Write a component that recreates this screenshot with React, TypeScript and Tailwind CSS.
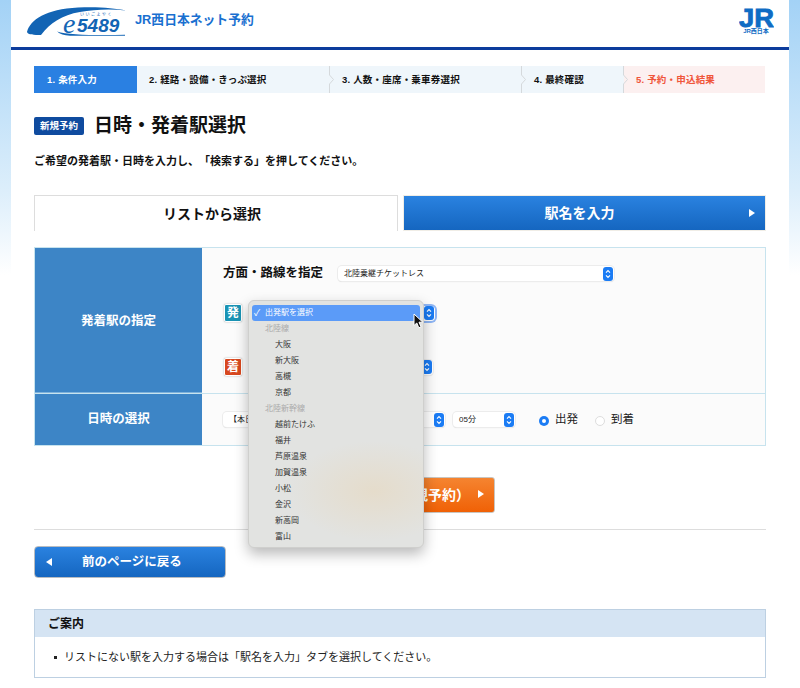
const font = '[font-family:"Liberation_Sans","Noto_Sans_CJK_JP",sans-serif]'

function Stepper() {
  return (
    <span className="flex h-[14px] w-[10px] shrink-0 flex-col items-center justify-center rounded-[3px] bg-[#1b7cf4]">
      <svg width="6" height="10" viewBox="0 0 6 10" fill="none" stroke="#fff" strokeWidth="1.1">
        <path d="M1 3.6 3 1.6 5 3.6" />
        <path d="M1 6.4 3 8.4 5 6.4" />
      </svg>
    </span>
  )
}

function Select({ width, label, focus }: { width: string; label: string; focus?: boolean }) {
  return (
    <div
      className={`flex h-[15px] items-center justify-between rounded-[4px] bg-white pl-[6px] pr-[1px] text-[8px] leading-none text-[#222] ${width} ${
        focus
          ? 'shadow-[0_0_0_2px_#8fb6f5]'
          : 'shadow-[0_0_0_1px_#ececec,0_1px_1px_rgba(0,0,0,0.15)]'
      }`}
    >
      <span className="whitespace-nowrap">{label}</span>
      <Stepper />
    </div>
  )
}

function Radio({ on, label }: { on?: boolean; label: string }) {
  return (
    <div className="flex items-center gap-[6px] text-[11.500px] leading-none text-[#222]">
      {on ? (
        <span className="mt-[3px] flex h-[10px] w-[10px] items-center justify-center rounded-full bg-[#1b7cf4]">
          <span className="h-[4px] w-[4px] rounded-full bg-white" />
        </span>
      ) : (
        <span className="mt-[3px] h-[10px] w-[10px] rounded-full border border-[#ddd] bg-white" />
      )}
      <span>{label}</span>
    </div>
  )
}

function Badge({ label, color }: { label: string; color: string }) {
  return (
    <span
      className={`ml-[1px] flex h-[18px] w-[18px] shrink-0 items-center justify-center rounded-[2px] border border-white text-[12px] font-bold leading-none text-white shadow-[0_0_2px_rgba(0,0,0,0.3)] ${color}`}
    >
      {label}
    </span>
  )
}

function Chevron({ color }: { color: string }) {
  return (
    <svg className="absolute left-[-1px] top-0" width="6" height="27" viewBox="0 0 6 27" fill="none" stroke={color} strokeWidth="1">
      <path d="M.5 0V9L4.5 13.5.5 18V27" />
    </svg>
  )
}

const steps = [
  { label: '2. 経路・設備・きっぷ選択', width: 'w-[193px]', bg: 'bg-[#eff6fb]', text: 'text-[#111]' },
  { label: '3. 人数・座席・乗車券選択', width: 'w-[192px]', bg: 'bg-[#eff6fb]', text: 'text-[#111]' },
  { label: '4. 最終確認', width: 'w-[102px]', bg: 'bg-[#eff6fb]', text: 'text-[#111]' },
  { label: '5. 予約・申込結果', width: 'w-[141px]', bg: 'bg-[#fcf0f0]', text: 'text-[#f0553a]' },
]

const menuGroups = [
  { name: '北陸線', items: ['大阪', '新大阪', '高槻', '京都'] },
  { name: '北陸新幹線', items: ['越前たけふ', '福井', '芦原温泉', '加賀温泉', '小松', '金沢', '新高岡', '富山'] },
]

function Logo() {
  return (
    <div className="relative h-[47px] w-[100px] shrink-0">
      <svg className="absolute left-0 top-0" width="100" height="47" viewBox="0 0 100 47">
        <path d="M1 32C4 20 20 9 52 7.500 72 6.500 88 8 100 10.500 84 8.800 68 9.500 54 12 36 15 24 23 15 35 8 35 2 35 1 32Z" fill="#1264b4" />
        <path d="M31 31.500C42 35 70 35.500 99 34.800V35.800H44C38 35.500 34 34 31 31.500Z" fill="#1264b4" />
      </svg>
      <span className="absolute left-[37px] top-[10px] font-['Liberation_Serif'] text-[28px] italic leading-none text-[#1264b4]">e</span>
      <span className="absolute left-[51px] top-[16px] text-[19px] font-bold italic leading-none text-[#1264b4]">5489</span>
      <span className="absolute left-[54px] top-[13px] text-[4px] leading-none tracking-[1.5px] text-[#1264b4]">いいごよやく</span>
    </div>
  )
}

function JrLogo() {
  return (
    <div className="flex w-[36px] flex-col items-center">
      <svg className="-mb-[6px]" width="35" height="33" viewBox="0 0 35 33">
        <text x="17.500" y="26.500" textAnchor="middle" fontFamily="Liberation Sans" fontWeight="700" fontSize="26" textLength="35" lengthAdjust="spacingAndGlyphs" fill="#0f6cc4" stroke="#0f6cc4" strokeWidth="0.8">JR</text>
      </svg>
      <span className="mt-[1px] text-[6px] font-bold leading-none text-[#0f6cc4]">JR西日本</span>
    </div>
  )
}

function Triangle({ left }: { left?: boolean }) {
  return (
    <svg width="6" height="8" viewBox="0 0 6 8" fill="#fff" className="shrink-0">
      <path d={left ? 'M6 0V8L0 4Z' : 'M0 0V8L6 4Z'} />
    </svg>
  )
}

export default function App() {
  return (
    <div className={`relative h-[688px] w-[800px] overflow-hidden bg-[linear-gradient(180deg,#a3d2f6_0px,#dceefb_190px,#ffffff_275px)] px-[11px] [text-spacing-trim:space-all] ${font}`}>
      <div className="h-full bg-white">
        {/* header */}
        <header className="flex h-[50px] items-start justify-between border-b-[3px] border-[#0c3c9c] pl-[15px] pr-[15px]">
          <div className="flex items-start">
            <Logo />
            <span className="ml-[9px] mt-[14px] text-[12.800px] font-bold leading-none text-[#1a70d0]">JR西日本ネット予約</span>
          </div>
          <JrLogo />
        </header>

        <main className="px-[23px] pt-[16px]">
          {/* steps */}
          <div className="flex h-[27px] text-[9.500px] font-bold leading-none">
            <div className="relative flex w-[103px] items-center bg-[#2a80e2] pl-[13px] tracking-[0.2px] text-white">
              1. 条件入力
              <span className="absolute right-[-4px] top-[9px] h-0 w-0 border-y-[4.500px] border-l-[4px] border-y-transparent border-l-[#2a80e2]" />
            </div>
            {steps.map((step, index) => (
              <div key={step.label} className={`relative flex items-center pl-[12px] ${step.width} ${step.bg} ${step.text}`}>
                {index > 0 && <Chevron color="#d5d9dc" />}
                <span className="whitespace-nowrap tracking-[0.2px]">{step.label}</span>
              </div>
            ))}
          </div>

          {/* title */}
          <div className="mt-[23px] flex items-center gap-[10px]">
            <span className="flex h-[18px] w-[50px] items-center justify-center rounded-[2px] bg-[#0f4b9f] text-[9.500px] font-bold leading-none text-white">新規予約</span>
            <h1 className="text-[19px] font-bold leading-none text-[#111]">日時・発着駅選択</h1>
          </div>
          <p className="mt-[21px] text-[11px] font-bold leading-none text-[#111]">ご希望の発着駅・日時を入力し、「検索する」を押してください。</p>

          {/* tabs */}
          <div className="mt-[28px] flex h-[36px] justify-between">
            <div className="flex w-[364px] items-center justify-center border-x-[1.500px] border-t-[1.500px] border-[#dddddd] pr-[8px] text-[14px] font-bold leading-none text-[#111]">
              リストから選択
            </div>
            <div className="relative flex w-[363px] items-center justify-center border border-[#f0ede6] bg-[linear-gradient(180deg,#2a82e0,#1566c0)] bg-clip-padding pr-[10px] text-[14px] font-bold leading-none text-white">
              駅名を入力
              <span className="absolute right-[10px] top-[13px]">
                <Triangle />
              </span>
            </div>
          </div>

          {/* form table */}
          <div className="mt-[16px] border border-[#c7e3ee] bg-[#fbfbfb]">
            <div className="flex h-[146px] border-b border-[#c7e3ee]">
              <div className="flex w-[167px] shrink-0 items-center justify-center border-b border-[#7eb2dc] bg-[#3d85c6] pt-[2px] text-[12.500px] font-bold leading-none text-white">
                発着駅の指定
              </div>
              <div className="pl-[21px] pt-[18px]">
                <div className="flex items-center gap-[15px]">
                  <span className="text-[12.500px] font-bold leading-none text-[#111]">方面・路線を指定</span>
                  <Select width="w-[276px]" label="北陸乗継チケットレス" />
                </div>
                <div className="mt-[23px] flex items-center gap-[10px]">
                  <Badge label="発" color="bg-[#1a93b4]" />
                  <Select width="w-[183px]" label="出発駅を選択" focus />
                </div>
                <div className="mt-[36px] flex items-center gap-[10px]">
                  <Badge label="着" color="bg-[#d8481f]" />
                  <Select width="w-[181px]" label="到着駅を選択" />
                </div>
              </div>
            </div>
            <div className="flex h-[51px]">
              <div className="flex w-[167px] shrink-0 items-center justify-center bg-[#3d85c6] text-[12.500px] font-bold leading-none text-white">
                日時の選択
              </div>
              <div className="flex items-center pl-[21px]">
                <Select width="w-[140px]" label="【本日】" />
                <div className="ml-[6px]">
                  <Select width="w-[76px]" label="10時" />
                </div>
                <div className="ml-[8px]">
                  <Select width="w-[62px]" label="05分" />
                </div>
                <div className="ml-[24px] flex items-center gap-[17px]">
                  <Radio on label="出発" />
                  <Radio label="到着" />
                </div>
              </div>
            </div>
          </div>

          {/* search */}
          <div className="mt-[31px] flex justify-center">
            <div className="relative flex h-[36px] w-[190px] items-center justify-center rounded-[3px] border-[1.500px] border-[#c9c5c0] bg-[linear-gradient(180deg,#f58430,#f06106)] text-[14px] font-bold leading-none text-white">
              検索する（新規予約）
              <span className="absolute right-[10px] top-[12px]">
                <Triangle />
              </span>
            </div>
          </div>

          <hr className="mt-[16px] border-t-[1.500px] border-[#dddddd]" />

          {/* back */}
          <div className="relative mt-[16px] flex h-[32px] w-[192px] items-center justify-center rounded-[4px] border-[1.500px] border-[#b9bcc0] bg-[linear-gradient(180deg,#2a82e0,#1566c0)] pl-[4px] text-[12.500px] font-bold leading-none text-white">
            前のページに戻る
            <span className="absolute left-[11px] top-[11px]">
              <Triangle left />
            </span>
          </div>

          {/* notice */}
          <section className="mt-[31px] border-[1.500px] border-[#bdd0e2]">
            <h2 className="flex h-[27px] items-center bg-[#d5e4f3] pl-[13px] text-[12px] font-bold leading-none text-[#111]">ご案内</h2>
            <div className="flex h-[40px] items-center gap-[7px] pl-[19px] text-[11px] leading-none text-[#222]">
              <span className="h-[3px] w-[3px] bg-[#222]" />
              リストにない駅を入力する場合は「駅名を入力」タブを選択してください。
            </div>
          </section>
        </main>
      </div>

      {/* open select menu */}
      <div className="absolute left-[248px] top-[300px] h-[248px] w-[176px] overflow-hidden rounded-[6px] border border-[#cfcfcd] bg-[#e2e3e1] shadow-[0_6px_14px_rgba(0,0,0,0.28)]">
        <div className="absolute left-[40px] top-[140px] h-[100px] w-[170px] bg-[radial-gradient(closest-side,#e5dccb,rgba(226,227,225,0))]" />
        <div className="relative pt-[4px] text-[8px] leading-none">
          <div className="mx-[3px] flex h-[16px] items-center rounded-[3px] bg-[#5b9bf8] pl-[2px] text-white">
            <span className="w-[11px] text-[9px]">✓</span>
            出発駅を選択
          </div>
          {menuGroups.map((group) => (
            <div key={group.name}>
              <div className="flex h-[16px] items-center pl-[16px] text-[#aaaaaa]">{group.name}</div>
              {group.items.map((item) => (
                <div key={item} className="flex h-[16px] items-center pl-[26px] text-[#333]">
                  {item}
                </div>
              ))}
            </div>
          ))}
        </div>
      </div>

      {/* mouse cursor */}
      <svg className="absolute left-[413px] top-[313px]" width="11" height="16" viewBox="0 0 11 16">
        <path d="M1 1V12.500L3.800 10 5.800 14.800 8 13.800 6 9.200H9.800Z" fill="#111" stroke="#fff" strokeWidth="1" />
      </svg>
    </div>
  )
}
